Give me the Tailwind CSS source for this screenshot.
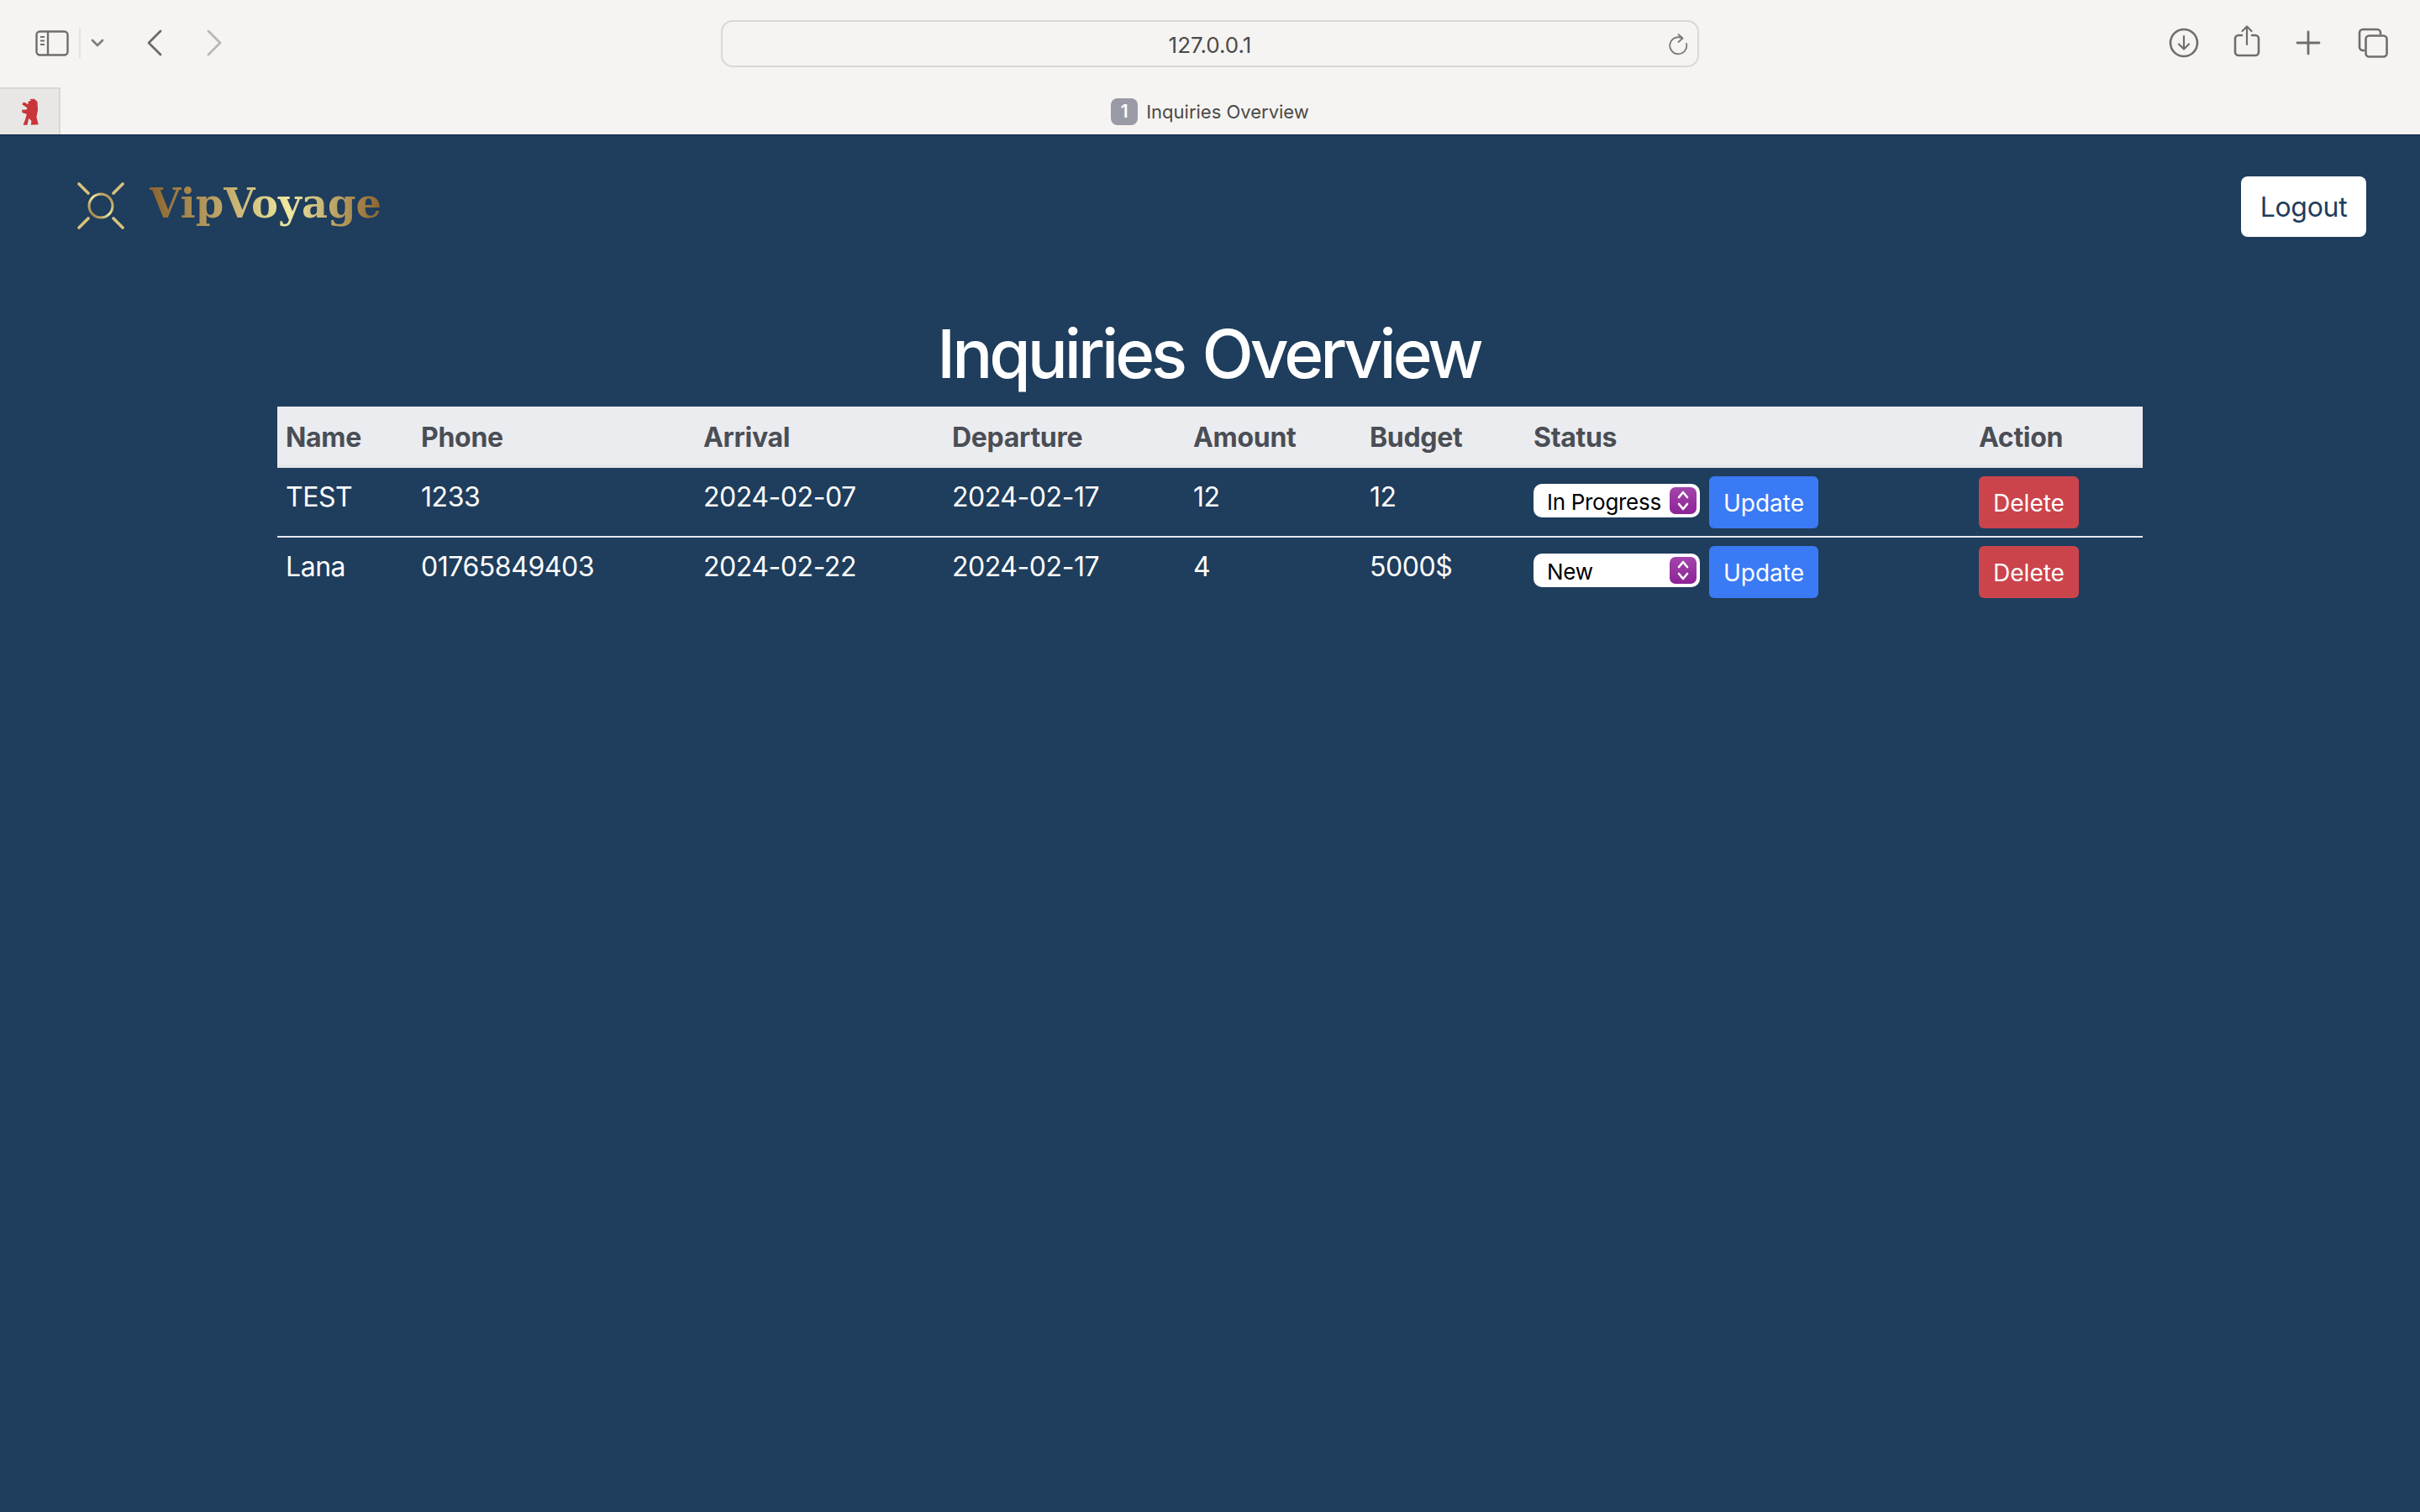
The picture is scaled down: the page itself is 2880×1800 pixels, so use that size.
<!DOCTYPE html>
<html><head><meta charset="utf-8"><title>Inquiries Overview</title>
<script src="https://cdn.jsdelivr.net/npm/@tailwindcss/browser@4"></script></head>
<body class="bg-[#1f3d5c] font-['Inter',sans-serif] min-h-[1800px]">
<header class="bg-[#f5f4f2] h-[160px] flex flex-col">
  <div class="h-[104px] grid grid-cols-[1fr_1164px_1fr] items-start">
    <div class="flex items-center h-[102px] pl-[42px]">
      <svg width="40" height="31" viewBox="0 0 40 31" fill="none" stroke="#6f6e6b" stroke-width="2.4"><rect x="1.5" y="1.5" width="37" height="28" rx="4"/><path d="M15 1.5V29.5"/><path d="M6 8h5M6 12.5h5M6 17h5" stroke-width="1.8"/></svg>
      <div class="w-[2px] h-[36px] bg-[#e3e2e0] ml-[12px]"></div>
      <svg class="ml-[12px]" width="16" height="11" viewBox="0 0 16 11" fill="none" stroke="#7d7c79" stroke-width="2.6" stroke-linecap="round" stroke-linejoin="round"><path d="M2 2l6 6 6-6"/></svg>
      <svg class="ml-[50px]" width="20" height="32" viewBox="0 0 20 32" fill="none" stroke="#6a6967" stroke-width="2.8" stroke-linecap="round" stroke-linejoin="round"><path d="M17 2L3 16l14 14"/></svg>
      <svg class="ml-[51px]" width="20" height="32" viewBox="0 0 20 32" fill="none" stroke="#b9b8b6" stroke-width="2.8" stroke-linecap="round" stroke-linejoin="round"><path d="M3 2l14 14L3 30"/></svg>
    </div>
    <div class="relative mt-[24px] h-[56px] rounded-[14px] border-2 border-[#d9d8d6] flex items-center justify-center">
      <span class="text-[26px] text-[#4b4a48] pt-[2px]">127.0.0.1</span>
      <svg class="absolute right-[10px] top-[13px]" width="24" height="30" viewBox="0 0 24 30" fill="none" stroke="#7a7977" stroke-width="1.8" stroke-linecap="round" stroke-linejoin="round"><path d="M16 6.5A10 10 0 1 0 21 13"/><path d="M11.5 2l5 4.5-5 4.5"/></svg>
    </div>
    <div class="flex justify-end items-center h-[102px] pr-[38px]">
      <svg width="36" height="36" viewBox="0 0 36 36" fill="none" stroke="#6f6e6b" stroke-width="2.6" stroke-linecap="round" stroke-linejoin="round"><circle cx="18" cy="18" r="16"/><path d="M18 10v15M12 19.5l6 6 6-6" stroke-width="2.2"/></svg>
      <svg class="ml-[41px] mt-[-4px]" width="32" height="40" viewBox="0 0 32 40" fill="none" stroke="#6f6e6b" stroke-width="2.6" stroke-linecap="round" stroke-linejoin="round"><path d="M10 13H6a4 4 0 0 0-4 4v16a4 4 0 0 0 4 4h20a4 4 0 0 0 4-4V17a4 4 0 0 0-4-4h-4"/><path d="M16 24V3M10.500 8L16 2.500 21.500 8" stroke-width="2.200"/></svg>
      <svg class="ml-[42px]" width="30" height="30" viewBox="0 0 30 30" fill="none" stroke="#6f6e6b" stroke-width="2.800" stroke-linecap="round"><path d="M15 2v26M2 15h26"/></svg>
      <svg class="ml-[44px]" width="36" height="36" viewBox="0 0 36 36" fill="none" stroke="#6f6e6b" stroke-width="2.600"><path d="M8 27H6a4 4 0 0 1-4-4V6a4 4 0 0 1 4-4h17a4 4 0 0 1 4 4v2"/><rect x="9.500" y="9.500" width="25" height="25" rx="4"/></svg>
    </div>
  </div>
  <div class="h-[56px] grid grid-cols-[1fr_auto_1fr]">
    <div><div class="w-[72px] h-[56px] bg-[#e8e7e5] border-t-2 border-r-2 border-[#d8d7d5] flex items-center justify-center">
      <svg width="23" height="33" viewBox="70 350 68 100" fill="#c9353a"><path d="M98 362L108 358L104 353L120 352L131 362L133 392L128 418L135 445L108 446L110 432L100 422L95 446L80 446L88 425L93 407L77 402L75 392L93 391L94 384L76 372L82 364L98 372Z"/></svg>
    </div></div>
    <div class="flex items-center gap-[10px] pt-[2px]">
      <span class="w-[32px] h-[32px] rounded-[8px] bg-[#9a9aa6] text-white text-[21px] font-semibold flex items-center justify-center">1</span>
      <span class="text-[22px] text-[#4b4a48]">Inquiries Overview</span>
    </div>
    <div></div>
  </div>
</header>
<div class="h-[1px] bg-[#0b2347]"></div>
<main>
  <nav class="flex justify-between items-start pl-[92px] pr-[64px] pt-[49px]">
    <a class="flex items-center gap-[30px] mt-[7px]">
      <svg width="56" height="56" viewBox="0 0 56 56" fill="none">
        <defs><linearGradient id="g" x1="0" y1="1" x2="1" y2="0"><stop offset="0" stop-color="#8f6a34"/><stop offset=".5" stop-color="#f0e8a0"/><stop offset="1" stop-color="#a27d3f"/></linearGradient></defs>
        <circle cx="28" cy="28" r="14" stroke="url(#g)" stroke-width="3"/>
        <path d="M2 2l11 11M54 2L43 13M2 54l11-11M54 54L43 43" stroke="#d8c27c" stroke-width="3.600" stroke-linecap="round"/>
      </svg>
      <span class="font-['DejaVu_Serif',serif] font-bold text-[48px] leading-[56px] mt-[-6px] bg-gradient-to-r from-[#8b6430] via-[#efe8a0] via-60% to-[#8b6430] bg-clip-text text-transparent">VipVoyage</span>
    </a>
    <button class="w-[149px] h-[72px] pt-[1px] bg-white rounded-[8px] text-[#1f3d5c] text-[32px] tracking-[-0.3px]">Logout</button>
  </nav>
  <h1 class="text-center text-[80px] font-medium tracking-[-4px] [word-spacing:4px] pr-[3px] text-white leading-[96px] mt-[91px] mb-[15px]">Inquiries Overview</h1>
  <table class="ml-[330px] w-[2220px] table-fixed text-left text-white text-[32px] leading-[48px] tracking-[-0.45px]">
    <thead><tr class="bg-[#ebecf0] text-[#4a4e55] tracking-[-0.3px]">
      <th class="w-[161px] pl-[10px] pt-[13px] pb-[8px] border-b-4 border-[#e4e5e9] font-bold">Name</th>
      <th class="w-[336px] pl-[10px] pt-[13px] pb-[8px] border-b-4 border-[#e4e5e9] font-bold">Phone</th>
      <th class="w-[296px] pl-[10px] pt-[13px] pb-[8px] border-b-4 border-[#e4e5e9] font-bold">Arrival</th>
      <th class="w-[287px] pl-[10px] pt-[13px] pb-[8px] border-b-4 border-[#e4e5e9] font-bold">Departure</th>
      <th class="w-[210px] pl-[10px] pt-[13px] pb-[8px] border-b-4 border-[#e4e5e9] font-bold">Amount</th>
      <th class="w-[195px] pl-[10px] pt-[13px] pb-[8px] border-b-4 border-[#e4e5e9] font-bold">Budget</th>
      <th class="w-[530px] pl-[10px] pt-[13px] pb-[8px] border-b-4 border-[#e4e5e9] font-bold">Status</th>
      <th class="pl-[10px] pt-[13px] pb-[8px] border-b-4 border-[#e4e5e9] font-bold">Action</th>
    </tr></thead>
    <tbody>
      <tr class="border-b-2 border-[#e6e8ec] align-top">
        <td class="pl-[10px] pt-[11px]">TEST</td><td class="pl-[10px] pt-[11px]">1233</td><td class="pl-[10px] pt-[11px]">2024-02-07</td><td class="pl-[10px] pt-[11px]">2024-02-17</td><td class="pl-[10px] pt-[11px]">12</td><td class="pl-[10px] pt-[11px]">12</td>
        <td class="pl-[10px] pt-[10px] pb-[9px]"><div class="flex items-start gap-[11px] tracking-normal">
          <div class="relative mt-[9px] w-[198px] h-[40px]">
            <select class="block appearance-none w-full h-full bg-white rounded-[10px] text-black text-[26px] tracking-[-0.3px] leading-[40px] pl-[16px] pt-[2px] font-['Inter',sans-serif]"><option selected>In Progress</option><option>New</option></select>
            <span class="absolute right-[4px] top-[4px] w-[32px] h-[32px] rounded-[7px] bg-gradient-to-b from-[#a344ab] to-[#8d2296] flex items-center justify-center pointer-events-none"><svg width="16" height="26" viewBox="0 0 16 26" fill="none" stroke="#fff" stroke-width="2.600" stroke-linecap="round" stroke-linejoin="round"><path d="M3 9l5-6 5 6M3 17l5 6 5-6"/></svg></span>
          </div>
          <button class="w-[130px] h-[62px] pt-[1px] bg-[#3a7af5] rounded-[6px] text-white text-[28px]">Update</button>
        </div></td>
        <td class="pl-[10px] pt-[10px] tracking-normal"><button class="w-[119px] h-[62px] pt-[1px] bg-[#cb444c] rounded-[6px] text-white text-[28px]">Delete</button></td>
      </tr>
      <tr class="align-top">
        <td class="pl-[10px] pt-[11px]">Lana</td><td class="pl-[10px] pt-[11px]">01765849403</td><td class="pl-[10px] pt-[11px]">2024-02-22</td><td class="pl-[10px] pt-[11px]">2024-02-17</td><td class="pl-[10px] pt-[11px]">4</td><td class="pl-[10px] pt-[11px]">5000$</td>
        <td class="pl-[10px] pt-[10px] pb-[10px]"><div class="flex items-start gap-[11px] tracking-normal">
          <div class="relative mt-[9px] w-[198px] h-[40px]">
            <select class="block appearance-none w-full h-full bg-white rounded-[10px] text-black text-[26px] tracking-[-0.3px] leading-[40px] pl-[16px] pt-[2px] font-['Inter',sans-serif]"><option>In Progress</option><option selected>New</option></select>
            <span class="absolute right-[4px] top-[4px] w-[32px] h-[32px] rounded-[7px] bg-gradient-to-b from-[#a344ab] to-[#8d2296] flex items-center justify-center pointer-events-none"><svg width="16" height="26" viewBox="0 0 16 26" fill="none" stroke="#fff" stroke-width="2.600" stroke-linecap="round" stroke-linejoin="round"><path d="M3 9l5-6 5 6M3 17l5 6 5-6"/></svg></span>
          </div>
          <button class="w-[130px] h-[62px] pt-[1px] bg-[#3a7af5] rounded-[6px] text-white text-[28px]">Update</button>
        </div></td>
        <td class="pl-[10px] pt-[10px] tracking-normal"><button class="w-[119px] h-[62px] pt-[1px] bg-[#cb444c] rounded-[6px] text-white text-[28px]">Delete</button></td>
      </tr>
    </tbody>
  </table>
</main>
</body></html>
